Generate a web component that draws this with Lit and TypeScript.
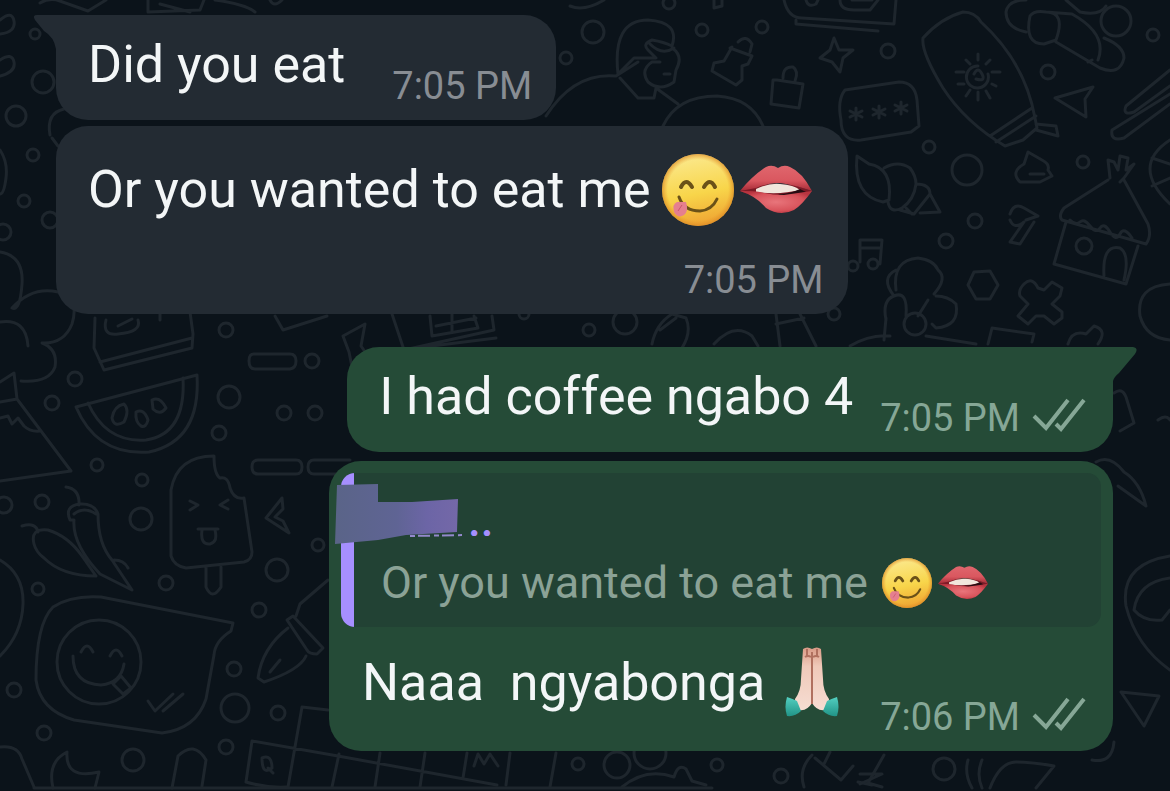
import { LitElement, html, svg, css } from "lit";
import { customElement, property } from "lit/decorators.js";

/* Small rings scattered over the wallpaper: centre x, centre y, radius. */
const RINGS: number[][] = [
  [35, 34, 5], [43, 82, 11], [16, 116, 10], [33, 155, 6], [24, 201, 6], [50, 220, 8], [3, 232, 8],
  [593, 32, 11], [566, 58, 6], [669, 3, 6], [702, 30, 6], [762, 27, 6],
  [888, 51, 7], [1153, 35, 6], [1048, 72, 7], [929, 147, 6], [967, 170, 15], [1083, 162, 6],
  [975, 221, 7], [946, 241, 7], [1084, 246, 8], [1116, 21, 15],
  [226, 330, 7], [75, 379, 7], [52, 403, 7], [312, 361, 7], [229, 397, 11], [284, 413, 7], [315, 413, 7],
  [219, 433, 7], [97, 465, 6], [142, 480, 6], [42, 502, 7], [4, 505, 8], [141, 519, 11],
  [38, 589, 6], [166, 583, 7], [277, 570, 11], [259, 610, 7], [234, 669, 7], [14, 690, 7],
  [235, 708, 14], [278, 713, 7], [44, 733, 7], [226, 747, 7], [133, 760, 11], [318, 545, 6],
  [589, 330, 6], [625, 322, 12], [524, 314, 5], [834, 314, 6], [944, 769, 11],
  [578, 764, 6], [617, 765, 13], [650, 753, 16], [717, 765, 6], [781, 776, 7],
];

/* Line drawings of the wallpaper. */
const DOODLES: string[] = [
  // bones and wedge at the left edge
  "M0 20q12-10 14 1t-14 13M0 60q12-8 14 2t-14 14",
  "M0 150q8 12 6 28t-6 16",
  "M40 3q10-6 20-2l28 10 18-11M148 0v12l52-2 4-10M160 4l30 8M215 0q30 4 40 12M270 0q4 8 12 0",
  "M50 135q-4-22 14-26M52 138l6 8",
  // cloud tree
  "M0 252q24 4 22 32t-10 24q20-22 46-16 22 6 14 32-8 20-30 19 16 6 13 24-6 16-34 14",
  "M0 322q26-4 28 24",
  // pizza slice
  "M0 382l14-9 3 26 54 72-71 10M17 399L0 402M0 418l8-2 4 8 6-6 6 8q6 6 16 5",
  // cake
  "M95 318l-1 30 10 22 88-22 1-14-3-22M100 362l92-24M106 320q-4 16 12 14 24-2 20-14M118 326l14-7M160 312v8",
  // watermelon
  "M76 407l121-32q4 66-48 77-52 4-73-45zM88 403q18 40 58 37 40-6 37-62",
  "M112 418q2-12 12-14 6 6 0 18-10 6-12-4zM136 412q8-4 12 8-2 8-7 6-6-4-5-14zM152 400q8-4 14 8-6 8-13 1z",
  // capsules
  "M255 354h35q6 0 6 7t-6 8h-35q-6 0-6-8t6-7zM258 460h38q6 0 6 7t-6 7h-38q-6 0-6-7t6-7zM350 460h-36q-6 0-6 7t6 7h30",
  // ice lolly
  "M171 556v-66q6-34 43-34 0 18 6 22 8-2 10 10 4 12 14 10l8 54q0 8-8 10l-58 6q-12-2-15-12zM206 567v20q6 14 15 0v-20",
  "M190 501l8 4-8 5M228 500l-8 5 8 4M198 529h20M202 530q-2 15 8 14 8-2 5-14",
  // star and arrow
  "M282 498l-16 20 23 15-6-12-8-4 8-8zM343 336l22-12-4 22 14 20-20-6-2 12-4-20z",
  // chillies
  "M66 487q14 2 13 18M70 520q-6-14 10-16 14-1 18 10 0 30 14 46l20 30-32-16q-28-30-26-54zM22 526q14-4 16 6M34 544q-4-16 14-14 20 6 34 26l14 20q-34 0-52-18-8-6-10-14zM114 560q10 0 14 8M74 514q10-8 22 0",
  // chat balloon with a face
  "M53 607q18-12 48-10l132 26-2 8q-16 10-17 24l-8 44q-10 30-44 34l-88-13q-34-10-38-40 0-56 17-73z",
  "M141 662a42 42 0 1 1-84 0 42 42 0 1 1 84 0zM81 652q6-12 12 0M110 656q6-12 12 0M73 656q0 28 28 29 20-2 23-21M113 684l8-8 10 12-8 6zM148 701l7 10 18-17M163 711l20-17",
  // brush
  "M328 580l-28 24-4 12M287 620l6-4 30 32-6 6q-8 0-10-4zM288 628q-26 20-30 50l6 4q36-12 42-26M270 672l10-12",
  "M0 560q24 14 23 44t-23 52M0 747q18-2 22 12l12 28",
  // moon and phone on the bottom edge
  "M53 788q-6-26 14-36-2 28 32 20l-4 16M172 788l6-32q16-16 28 4l-4 26",
  // crossword grid
  "M246 782l6-41 86 15 159 29M288 787l14-80 26 3M332 787l7-33M375 787l5-34M420 787l5-34M463 778l4-25M506 785l4-32M550 787l6-34M246 782q20 6 40 5M474 766l4-12 6 10 6-10 8 12M262 758q10-4 10 10-10 8-10-10zM268 768l5 5",
  // animal on the bottom edge
  "M622 787q24-20 52-10 4-14 12-8l6 12 14 4",
  "M812 755q-14 14-8 32M815 758l26 22 12-14M830 752l-6 12M884 755l-16 28 14 4M858 782l14 3",
  // row of items below the grey bubble
  "M392 314l12 36 90-20-2-14M430 316l2 20 46-8-4-12M452 314v18M436 326l40-8M400 350l96-12M275 316l8 14 44-14",
  "M652 344q4-20 20-30l14 4q6 14-4 30M660 330l16-12M714 344q20-22 38-8l6 10M776 314l4 32M776 324l28-6M800 314l16 32",
  // seated figure and ball
  "M546 116q28-44 70-40l22-14M618 74q-6-54 30-54 32 2 24 26-8-4-20-6-10 4-4 10l8 8h-22l-14 14M672 48q12 8 4 22l-2 12q-14 10-26 0-8-12 4-20l8 0M620 78l18 20h16l2-10 22 16M663 126q14-30 54-30 34 2 46 30M664 74h6M650 44q12 12 24 4",
  "M570 6q14 6 34-6M714 0v8l8-2V0",
  // pin
  "M730 48l22 8-4 8-6 2 0 14-6 5-24-14 2-8 10-2 8-14zM738 42q8-8 14 2l-2 8",
  // padlock
  "M777 80l26 4-4 24-28-4 2-24zM783 78q0-12 10-11 6 4 2 14",
  // sparkle
  "M834 38l5 12 14 0-10 8-3 14-8-10-12-4 10-8z",
  // car
  "M784 0q4 18 18 18l92 6 2-24M796 20v4l82 7M806 0q2 8 10 4l2-4M840 0q0 10 14 10h16l8-10M852 0h20",
  // password card
  "M845 90l54-8q16 0 18 18l2 26-8 6-50 8q-20 2-20-20-4-20 4-30zM856 108v12M850 111l12 6M862 111l-12 6M879 106v12M873 109l12 6M885 109l-12 6M901 102v12M895 105l12 6M907 105l-12 6",
  // sack with a sun
  "M923 38q18-20 40-26 12 0 18 10 44 40 54 96l2 10-14 12-18 6q-40-24-62-58-22-36-20-50zM990 136l42-28M996 142l40-26M1036 124l20 2 2 10-22-6M978 66a11 11 0 1 0 10 8M974 74q4-8 8 0t-6 5M978 54v6M966 60l4 4M990 60l-4 4M956 72h8M992 72h8M958 84h6M996 86l-4-2M966 96l4-6M978 100v-8M990 98l-4-7",
  // rolled sausage
  "M1026 32q-20-4-20-20 2-12 20-12M1030 16q-6 28 14 28l12-4q10-28-10-28-12-2-16 4zM1046 12l26 2q36 20 26 46M1056 42l44 26q20 8 24-10 0-12-20-20M1066 0l14 12q20 4 26-6M1092 60l-4 2",
  // paper plane, sticks
  "M1055 98l38-11-8 12 1 18zM1170 70l-44 36q-4 10 8 6l36-26M1170 94l-58 36q-2 12 12 8l46-34",
  // shell
  "M857 156q-4 40 26 46l6-2q4-32-20-36zM884 168q14-8 26 0 6 8 6 16-2 16-14 24-12 6-14-6M916 184q14 0 14 10-8 10-16 20l-14-4M930 194l10 18-20 1M906 208l6 6",
  // bird and hammer
  "M1028 152l14 8q8 4 6 10l4 6-12 6h-20q-10-10 4-18zM1030 174h14M1010 214q4-12 14-6l14 8-12 4M1010 220q4 10 14 2l-14 20 10 2 14-22",
  // beamed notes
  "M860 262v-22l22 0-2 24M860 248h20M858 266a5 5 0 1 0-10 0 5 5 0 1 0 10 0M878 264a5 5 0 1 0-10 0 5 5 0 1 0 10 0",
  // house
  "M1108 180l-44 28q-6 8-2 12l84 24q6-8 2-20l-24-44M1110 178l-2-18 6 2 4 8 2-14 8 2-2 12 8-6-10 14-4 4M1066 222l-12 42 72 20 12-38M1104 276q-2-32 16-28 10 6 4 32M1070 220q6 6 10 2t10 4 10 2 10 4 10 2 12 4",
  "M1170 140q-40 26 0 64M1152 158l18 6M1152 186l18-8M1170 284q-34 2-30 32 6 22 30 24",
  // flower
  "M896 290q-4-30 22-32 16 2 20 12 10 8-4 24M894 296q-14-18 2-26M886 320q-4-20 8-24 14-6 12 20M936 296q12 0 20 8 4 22-20 24l-4-4M928 300l-10 16M926 324a11 11 0 1 0-22 0 11 11 0 1 0 22 0M886 318l-2 22M850 346q20-12 40-10M926 336l50 8",
  "M974 272l16-1 8 14-8 14h-14l-8-14z",
  // cross
  "M1024 284q8-8 14 4l6 2 8-8 10 6-2 8-8 8 10 8 0 6-8 6-10-8-8 0-8 8-10-8 10-12-8-8q-2-6 4-12z",
  "M988 344l4-16 42 6-2 8M1068 344q4-14 18-10l8-8q14 4 4 18",
  // right edge
  "M1114 393q8-6 12 4l8 26-14 8M1096 462q14-8 28 10 16 10 22 34l-28-20M1170 556q-50 8-44 50 10 40 44 64M1170 578q-32 4-36 32 10 12 28 10l8-10",
  "M1121 692l38 4-15 30zM1092 760q20 4 22-18M1158 420q8-6 12 0",
  "M860 784l22-10-22 0M968 760q-4 14 4 28M982 760q-6 14 0 28M990 788q10-26 26-26t38 4l-18 22",
];

@customElement("chat-wallpaper")
export class ChatWallpaper extends LitElement {
  static styles = css`
    :host { display: block; overflow: hidden; background: #0b131a; }
    .art { display: block; width: 100%; height: 100%; fill: none; stroke: #1e262d; stroke-width: 3; stroke-linejoin: round; stroke-linecap: round; }
  `;
  render() {
    return html`<svg class="art" viewBox="0 0 1170 791" preserveAspectRatio="xMidYMid slice" aria-hidden="true">
      ${DOODLES.map((d) => svg`<path d=${d}></path>`)}
      ${RINGS.map(([x, y, r]) => svg`<circle cx=${x} cy=${y} r=${r}></circle>`)}
      <path d="M34 788H712"></path>
    </svg>`;
  }
}

@customElement("chat-emoji")
export class ChatEmoji extends LitElement {
  @property() name = "yum";
  static styles = css`
    :host { display: block; flex: none; width: 72px; height: 72px; }
    :host([small]) { width: 50px; height: 50px; }
    svg { display: block; width: 100%; height: 100%; overflow: visible; }
  `;
  render() {
    if (this.name === "lips") {
      return html`<svg viewBox="0 0 72 72" role="img" aria-label="lips">
        <defs>
          <linearGradient id="u" x1="0" y1="0" x2="0" y2="1"><stop offset="0" stop-color="#e0666d"></stop><stop offset=".6" stop-color="#d9575f"></stop><stop offset="1" stop-color="#a52a36"></stop></linearGradient>
          <radialGradient id="l" cx=".5" cy=".5" r=".55"><stop offset="0" stop-color="#e8757b"></stop><stop offset=".7" stop-color="#d8535b"></stop><stop offset="1" stop-color="#b83540"></stop></radialGradient>
        </defs>
        <path fill="#7d1a26" d="M0 37l16-7 38 1 18 6-22 8-34-2z"></path>
        <path fill="#f1e6dc" d="M16 35q12-6 24-5 14 1 20 6-20 5-44 2z"></path>
        <path fill="#260d12" d="M38 40q12 0 22-5l6 3-22 5z"></path>
        <path fill="url(#u)" d="M0 37Q12 22 26 13q6-3 12 1 6-4 12-1 12 5 22 24-14-5-26-7-14-3-30 4z"></path>
        <path fill="url(#l)" d="M0 37q14 0 20 1 12 3 24 3 14-2 28-4-10 14-18 19-14 7-28-2-10-12-26-17z"></path>
      </svg>`;
    }
    if (this.name === "pray") {
      return html`<svg viewBox="0 0 72 72" role="img" aria-label="folded hands">
        <defs>
          <linearGradient id="h" x1="0" y1="0" x2="0" y2="1"><stop offset="0" stop-color="#d99a86"></stop><stop offset=".3" stop-color="#efc9b9"></stop><stop offset="1" stop-color="#f6ddd2"></stop></linearGradient>
          <linearGradient id="c" x1="0" y1="0" x2="0" y2="1"><stop offset="0" stop-color="#53cfc0"></stop><stop offset="1" stop-color="#219487"></stop></linearGradient>
        </defs>
        <path fill="url(#h)" d="M27 2q4-3 9 0v54q-6 10-16 6l-1-10q6-8 6-20z"></path>
        <path fill="url(#h)" d="M45 2q-4-3-9 0v54q6 10 16 6l1-10q-6-8-6-20z"></path>
        <path fill="none" stroke="#b0705f" stroke-width="2" d="M36 5v52M29 10q3-2 6 0M37 10q3-2 6 0M31 2v7M41 2v7"></path>
        <path fill="url(#c)" d="M11 50q6 2 10 4l4 10q-6 6-14 5Q8 60 11 50z"></path>
        <path fill="url(#c)" d="M61 50q-6 2-10 4l-4 10q6 6 14 5 3-9 0-19z"></path>
      </svg>`;
    }
    return html`<svg viewBox="0 0 72 72" role="img" aria-label="face savouring food">
      <defs>
        <linearGradient id="f" x1=".4" y1="0" x2=".6" y2="1"><stop offset="0" stop-color="#fbe98e"></stop><stop offset=".55" stop-color="#f8d54a"></stop><stop offset="1" stop-color="#eea231"></stop></linearGradient>
        <radialGradient id="s" r=".5"><stop offset=".84" stop-color="#e9962b" stop-opacity="0"></stop><stop offset="1" stop-color="#d98724" stop-opacity=".7"></stop></radialGradient>
      </defs>
      <circle cx="36" cy="36" r="36" fill="url(#f)"></circle>
      <circle cx="36" cy="36" r="36" fill="url(#s)"></circle>
      <path fill="none" stroke="#6a5118" stroke-width="4" stroke-linecap="round" d="M19 33q5-10 11 0M42 33q6-10 11 0"></path>
      <path fill="none" stroke="#6a5118" stroke-width="3" stroke-linecap="round" d="M17 43q5 14 21 14 12-1 17-12"></path>
      <path fill="#e57f8f" d="M24 48q3 9-2 13-6 4-10-3-2-8 3-10z"></path>
      <path fill="none" stroke="#c9566c" stroke-width="1" d="M20 51l-4 6"></path>
    </svg>`;
  }
}

@customElement("chat-time")
export class ChatTime extends LitElement {
  @property({ type: Boolean }) read = false;
  static styles = css`
    :host { display: flex; align-items: flex-end; justify-content: flex-end; flex: none; gap: 12px; font-size: 38px; line-height: 44px; white-space: nowrap; }
    svg { width: 54px; height: 44px; fill: none; stroke: currentColor; stroke-width: 4; }
  `;
  render() {
    return html`<slot></slot>${this.read
      ? html`<svg viewBox="0 0 54 44" role="img" aria-label="Delivered"><path d="M2 20l12 12L36 4M24 28l5 5L52 4"></path></svg>`
      : ""}`;
  }
}

@customElement("app-root")
export class AppRoot extends LitElement {
  static styles = css`
    :host { display: grid; min-height: 100vh; font-family: Roboto, "Noto Sans", sans-serif; overflow: hidden; }
    chat-wallpaper { grid-area: 1 / 1; height: 0; min-height: 100%; }
    .thread { grid-area: 1 / 1; z-index: 1; display: flex; flex-direction: column; align-items: flex-start; margin: 0; padding: 15px 57px 39px 56px; list-style: none; }
    .bubble { position: relative; box-sizing: border-box; border-radius: 32px; padding: 20px 24px 12px 32px; background: #232b33; color: #f3f6f7; }
    .bubble + .bubble { margin-top: 6px; }
    .bubble + .turn { margin-top: 33px; }
    .turn + .bubble { margin-top: 9px; }
    .in-first { border-top-left-radius: 0; }
    .out { align-self: flex-end; padding-right: 27px; background: #254b37; }
    .turn { border-top-right-radius: 0; }
    .row { display: flex; align-items: flex-end; }
    .wide { gap: 47px; }
    .near { gap: 27px; }
    .text { margin: 0; padding-bottom: 13px; font-size: 52px; line-height: 60px; white-space: pre; }
    .line { display: flex; align-items: center; gap: 6px; margin: 0; font-size: 52px; line-height: 88px; white-space: pre; }
    .line span { margin-right: -8px; }
    .tall { padding-right: 24px; }
    .tall .line { padding-right: 12px; margin-bottom: 24px; }
    chat-time { color: #888d93; }
    .out chat-time { color: #86a796; }
    .tail { position: absolute; top: 0; width: 24px; height: 34px; }
    .tail-left { right: 100%; fill: #232b33; }
    .tail-right { left: 100%; fill: #254b37; }
    .quoted { padding: 12px 12px 12px; width: 784px; }
    .quoted .row { justify-content: space-between; padding: 0 15px 0 21px; }
    .quoted .row .line { line-height: 112px; }
    .quote { position: relative; display: flex; margin: 0; border-radius: 14px; overflow: hidden; background: #224234; }
    .bar { width: 13px; background: #a68fff; }
    .quote-body { flex: 1; padding: 20px 0 14px 27px; }
    .name { margin: 0 0 6px; padding-left: 87px; color: #a68fff; font-size: 46px; line-height: 54px; font-weight: 500; }
    .quote .line { font-size: 45px; line-height: 60px; color: #8ba296; }
    .quote .line span { margin-right: -3px; }
    .cover { position: absolute; top: 21px; left: 5px; width: 128px; height: 64px; }
  `;
  render() {
    return html`
      <chat-wallpaper></chat-wallpaper>
      <ul class="thread">
        <li class="bubble in-first">
          <svg class="tail tail-left" viewBox="0 0 24 34" aria-hidden="true"><path d="M24 0H5Q0 0 3 5L12 16Q22 22 24 34z"></path></svg>
          <div class="row wide"><p class="text">Did you eat</p><chat-time>7:05 PM</chat-time></div>
        </li>
        <li class="bubble tall">
          <p class="line"><span>Or you wanted to eat me </span><chat-emoji name="yum"></chat-emoji><chat-emoji name="lips"></chat-emoji></p>
          <chat-time>7:05 PM</chat-time>
        </li>
        <li class="bubble out turn">
          <svg class="tail tail-right" viewBox="0 0 24 34" aria-hidden="true"><path d="M0 0H20Q26 1 22 7L6 26Q1 30 0 34z"></path></svg>
          <div class="row near"><p class="text">I had coffee ngabo 4</p><chat-time read>7:05 PM</chat-time></div>
        </li>
        <li class="bubble out quoted">
          <blockquote class="quote">
            <div class="bar"></div>
            <div class="quote-body">
              <p class="name">..</p>
              <p class="line"><span>Or you wanted to eat me </span><chat-emoji small name="yum"></chat-emoji><chat-emoji small name="lips"></chat-emoji></p>
            </div>
          </blockquote>
          <svg class="cover" viewBox="0 0 128 64" aria-hidden="true">
            <defs><linearGradient id="g"><stop offset="0" stop-color="#5a6488"></stop><stop offset=".5" stop-color="#5f6494"></stop><stop offset=".75" stop-color="#6c65a6"></stop><stop offset="1" stop-color="#7468a8"></stop></linearGradient></defs>
            <path fill="url(#g)" d="M3 3L44 2V20L78 20 124 17 123 50 72 53 44 58 1 62z"></path>
            <path stroke="#9389cc" stroke-width="2" stroke-dasharray="5 3 12 4" fill="none" d="M76 54L134 53"></path>
          </svg>
          <div class="row"><p class="line"><span>Naaa  ngyabonga </span><chat-emoji name="pray"></chat-emoji></p><chat-time read>7:06 PM</chat-time></div>
        </li>
      </ul>
    `;
  }
}
